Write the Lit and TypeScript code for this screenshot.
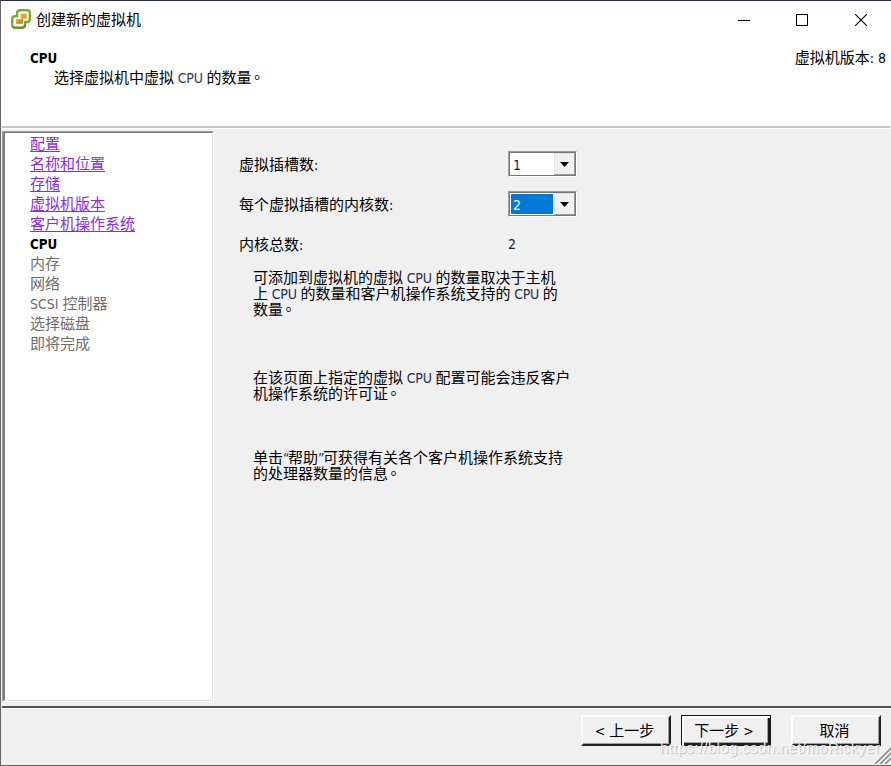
import { LitElement, html, css, svg } from "lit";
import { customElement, property } from "lit/decorators.js";

// Latin runs and the centred full stop use other faces than the ideographs around them.
const mixed = (text: string) =>
  text
    .split(/([\x20-\x7e]+|。)/)
    .filter(Boolean)
    .map((part) =>
      part === "。"
        ? html`<span class="stop" lang="zh-TW">。</span>`
        : /^[\x20-\x7e]/.test(part)
          ? html`<span class="latin">${part}</span>`
          : part
    );

const shared = css`
  * { box-sizing: border-box; }
  .latin {
    font-family: "DejaVu Sans Condensed", "DejaVu Sans", sans-serif; font-stretch: condensed;
    font-size: 14px; line-height: 1; white-space: pre; color: var(--latin, inherit); letter-spacing: var(--track, 0);
  }
  .quote { letter-spacing: -1.5px; }
  .stop { font-family: "Noto Sans CJK TC", sans-serif; line-height: 1; margin-left: -2px; }
`;

@customElement("combo-box")
class ComboBox extends LitElement {
  @property() value = "";
  @property({ type: Boolean }) active = false;
  static styles = [
    shared,
    css`
      :host { display: block; width: 69px; height: 26px; }
      .box {
        display: flex; height: 26px; background: #fff;
        border: 1px solid; border-color: #999 #fff #fff #a0a0a0;
      }
      .inner {
        display: flex; flex: 1; padding: 1px 0 0 1px;
        border: 1px solid; border-color: #777 #777 #777 #777;
      }
      .value { flex: 1; height: 20px; line-height: 20px; padding-left: 2px; margin-right: 1px; color: #1b1b3b; }
      .active .value { background: #0078d7; color: #fff; }
      .arrow {
        width: 21px; background: #f0f0f0; display: flex; align-items: center; justify-content: center;
        border: 1px solid; border-color: #e3e3e3 #999 #999 #e3e3e3; margin-top: -1px;
      }
      svg { display: block; }
    `,
  ];
  render() {
    return html`<div class="box ${this.active ? "active" : ""}">
      <div class="inner">
        <div class="value"><span class="latin">${this.value}</span></div>
        <div class="arrow"><svg width="9" height="5"><path d="M0 0H9L4.5 5Z" fill="#000" /></svg></div>
      </div>
    </div>`;
  }
}

const logo = svg`
  <path d="M9.500 1.300H16.500Q18.800 1.300 18.800 4V10Q18.800 13.200 15.500 13.200H14V15.500Q14 18.600 11 18.600H4Q1.200 18.600 1.200 16V10.500Q1.200 7.300 4 7.300H6V4.500Q6 1.300 9.500 1.300Z"
    fill="#fdfef8" stroke="#74ad35" stroke-width="2.400"/>
  <path d="M1.800 17.500Q2.500 18.700 4 18.700H11Q14 18.700 14.100 15.500" fill="none" stroke="#5f8e40" stroke-width="2"/>
  <path d="M9.800 4.500H15.800V9.800H11.800V14.800H5V10H9.800Z" fill="#eda52c"/>
  <path d="M5 14.800L11.800 9V14.800Z" fill="#d58a1c"/>`;

@customElement("app-root")
class AppRoot extends LitElement {
  static styles = [
    shared,
    css`
      :host {
        display: block; width: 891px; height: 766px; overflow: hidden; color: #000;
        font: 15px "Noto Sans CJK SC", sans-serif;
      }
      .window {
        position: relative; height: 766px; display: flex; flex-direction: column; background: #f0f0f0;
        border: 1px solid #666; border-top-color: #282b3b; border-right: 0;
      }
      .title { height: 37px; display: flex; align-items: center; background: #fff; padding-left: 10px; }
      .title .name { flex: 1; padding: 0 0 2px 4px; line-height: 35px; }
      .title svg { display: block; }
      .controls { display: flex; padding-right: 24px; }
      .controls svg { margin-left: 47px; }
      .controls .min { margin: 0 -1px 0 0; }
      .head {
        height: 88px; background: #fff; padding: 9px 5px 0 29px; line-height: 20px;
        display: flex; justify-content: space-between;
      }
      .head .sub { padding-left: 24px; --latin: #333a55; --track: -0.25px; }
      .bold { font-weight: 700; }
      .bold .latin { font-size: 13.300px; }
      .rule { height: 3px; margin: 0 1px; background: #c6c6c6; border-bottom: 1px solid #fff; }
      .body { flex: 1; display: flex; padding: 2px 0 4px 1px; }
      .steps { width: 212px; border: 1px solid; border-color: #a0a0a0 #fff #fff #a0a0a0; }
      .list {
        height: 100%; background: #fff; padding: 0 0 0 25px;
        border: 1px solid; border-width: 1px 1px 1px 2px; border-color: #777 #e3e3e3 #e3e3e3 #807c7c;
      }
      .step { height: 20px; line-height: 20px; color: #6d6d6d; white-space: nowrap; }
      .done { color: #8a2be2; text-decoration: underline; text-decoration-thickness: 1px; text-underline-offset: 2px; }
      .now { color: #000; }
      .form { padding: 20px 0 0 25px; width: 371px; white-space: nowrap; }
      .row { display: flex; height: 40px; }
      .row .label { width: 269px; line-height: 25px; }
      .row .total { line-height: 24px; color: #1b1b3b; }
      .note { padding-left: 14px; line-height: 16px; --latin: #262d4d; --track: -0.25px; }
      .note div { height: 16px; }
      .n1 { height: 100px; margin-top: -2px; }
      .n2 { height: 80px; }
      .footer {
        height: 59px; margin-left: 1px; border-top: 2px solid #555;
        box-shadow: inset 0 1px #fff; padding: 7px 10px 0 0;
        display: flex; justify-content: flex-end;
      }
      .btn {
        width: 90px; height: 31px; margin-left: 10px; background: #f0f0f0; color: #000;
        border: 2px solid; border-color: #fff #202020 #202020 #fff; line-height: 26px;
        text-align: center; box-shadow: inset -1px -1px #a0a0a0; padding-right: 3px;
      }
      .default { border: 1px solid #111; padding: 0 4px 2px 0; line-height: 28px;
        box-shadow: inset 2px 2px #fff, inset -2px -2px #202020, inset -3px -3px #a0a0a0; }
      .cancel { margin-left: 20px; }
      .mark {
        position: absolute; left: 659px; top: 738px; line-height: 18px; font-family: "Liberation Sans", sans-serif;
        font-size: 15px; letter-spacing: 0.36px; color: rgba(255, 255, 255, 0.85); text-shadow: 1px 1px 1px rgba(110, 110, 110, 0.4);
        white-space: nowrap;
      }
      .grip { position: absolute; right: 0; bottom: 1px; display: block; }
    `,
  ];

  render() {
    const done = ["配置", "名称和位置", "存储", "虚拟机版本", "客户机操作系统"];
    const later = ["内存", "网络", "SCSI 控制器", "选择磁盘", "即将完成"];
    const lines = (list: string[]) => list.map((l) => html`<div>${mixed(l)}</div>`);
    return html`<div class="window">
      <div class="title">
        <svg width="21" height="21">${logo}</svg>
        <div class="name">创建新的虚拟机</div>
        <div class="controls">
          <svg class="min" width="12" height="12" shape-rendering="crispEdges"><path d="M0 6.5H12" stroke="#000" /></svg>
          <svg width="12" height="12" shape-rendering="crispEdges"><rect x=".5" y=".5" width="11" height="11" fill="none" stroke="#000" /></svg>
          <svg width="12" height="12"><path d="M0 0L12 12M12 0L0 12" stroke="#000" stroke-width="1.1" /></svg>
        </div>
      </div>
      <div class="head">
        <div>
          <div class="bold"><span class="latin">CPU</span></div>
          <div class="sub">${mixed("选择虚拟机中虚拟 CPU 的数量。")}</div>
        </div>
        <div>${mixed("虚拟机版本: 8")}</div>
      </div>
      <div class="rule"></div>
      <div class="body">
        <div class="steps"><div class="list">
          ${done.map((s) => html`<div class="step"><span class="done">${s}</span></div>`)}
          <div class="step now bold"><span class="latin">CPU</span></div>
          ${later.map((s) => html`<div class="step">${mixed(s)}</div>`)}
        </div></div>
        <div class="form">
          <div class="row"><div class="label">${mixed("虚拟插槽数:")}</div><combo-box value="1"></combo-box></div>
          <div class="row"><div class="label">${mixed("每个虚拟插槽的内核数:")}</div><combo-box value="2" active></combo-box></div>
          <div class="row"><div class="label">${mixed("内核总数:")}</div><div class="total"><span class="latin">2</span></div></div>
          <div class="note n1">${lines(["可添加到虚拟机的虚拟 CPU 的数量取决于主机", "上 CPU 的数量和客户机操作系统支持的 CPU 的", "数量。"])}</div>
          <div class="note n2">${lines(["在该页面上指定的虚拟 CPU 配置可能会违反客户", "机操作系统的许可证。"])}</div>
          <div class="note">
            <div>单击<span class="latin quote">“</span>帮助<span class="latin quote">”</span>可获得有关各个客户机操作系统支持</div>
            <div>${mixed("的处理器数量的信息。")}</div>
          </div>
        </div>
      </div>
      <div class="footer">
        <div class="btn">${mixed("< 上一步")}</div>
        <div class="btn default">${mixed("下一步 >")}</div>
        <div class="btn cancel">取消</div>
      </div>
      <div class="mark">https://blog.csdn.net/moRickyer</div>
      <svg class="grip" width="17" height="17"><path d="M1 17L17 1M6 17L17 6M11 17L17 11" stroke="#888" stroke-width="1.8" /><path d="M-.5 17L17 -.5M4.500 17L17 4.500M9.500 17L17 9.500" stroke="#fff" stroke-width=".7" /></svg>
    </div>`;
  }
}
